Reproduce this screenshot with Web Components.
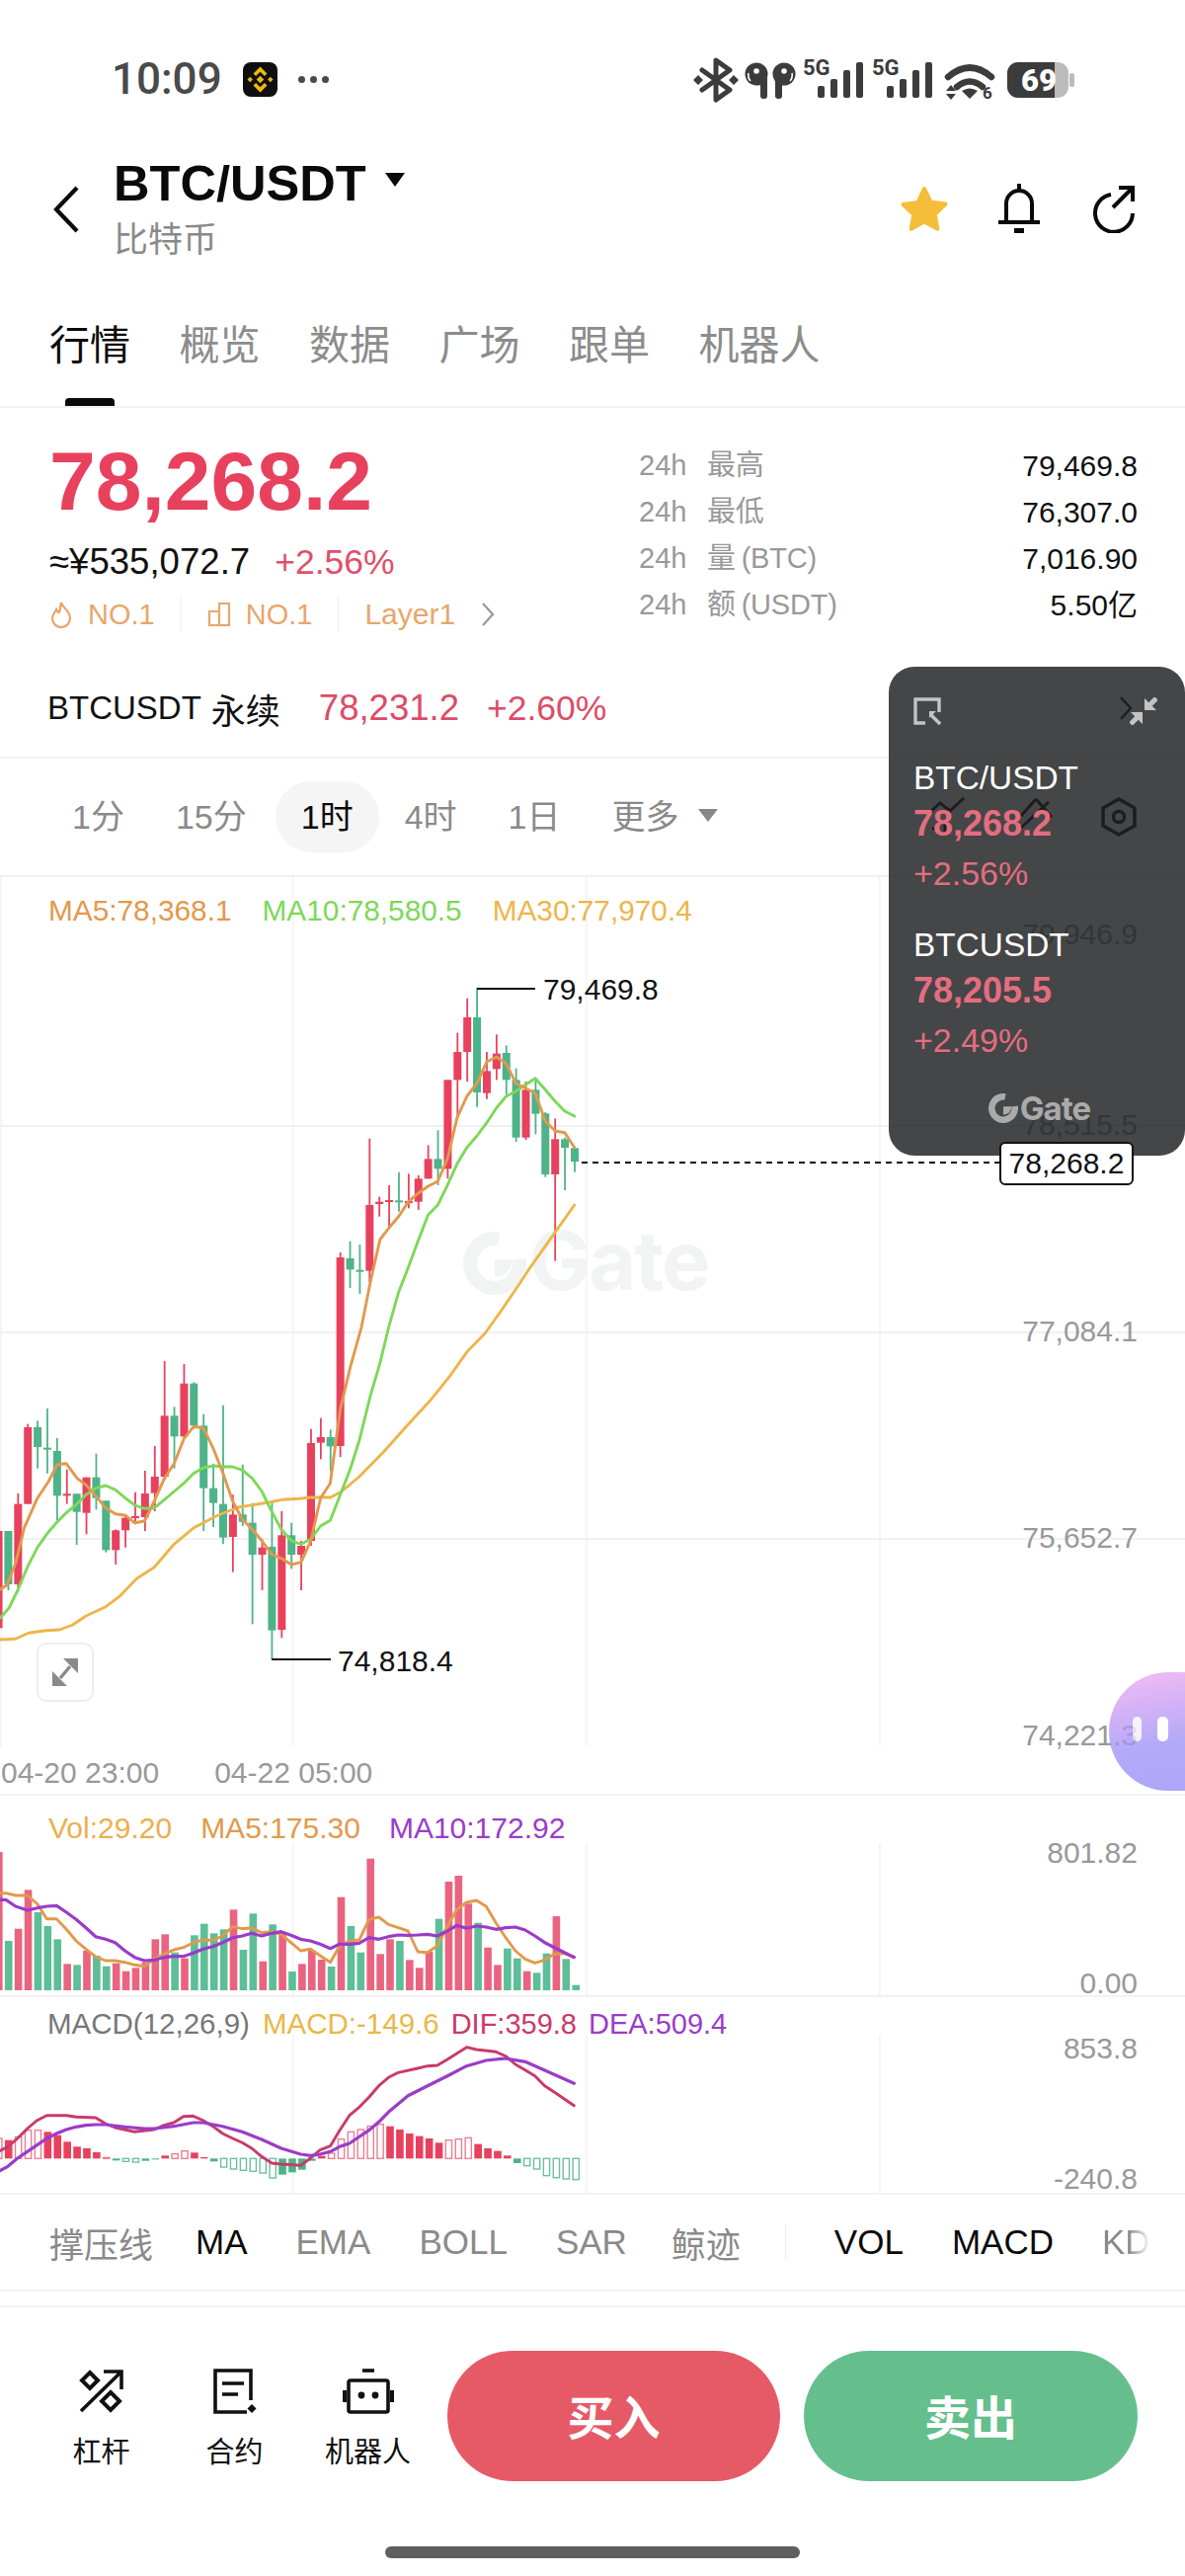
<!DOCTYPE html>
<html lang="zh">
<head>
<meta charset="utf-8">
<title>BTC/USDT</title>
<style>
  html, body { margin: 0; padding: 0; background: #fff; }
  body { font-family: "Liberation Sans", "Noto Sans CJK SC", sans-serif; color: #000; }
</style>
</head>
<body>
<trade-app>
  <status-bar></status-bar>
  <pair-header></pair-header>
  <tab-row>
    <tab-item active>行情</tab-item><tab-item>概览</tab-item><tab-item>数据</tab-item>
    <tab-item>广场</tab-item><tab-item>跟单</tab-item><tab-item>机器人</tab-item>
  </tab-row>
  <price-summary>
    <stat-row label="最高" value="79,469.8"></stat-row>
    <stat-row label="最低" value="76,307.0"></stat-row>
    <stat-row label="量 (BTC)" value="7,016.90"></stat-row>
    <stat-row label="额 (USDT)" value="5.50亿"></stat-row>
  </price-summary>
  <contract-row></contract-row>
  <interval-bar></interval-bar>
  <kline-main></kline-main>
  <kline-vol></kline-vol>
  <kline-macd></kline-macd>
  <indicator-bar></indicator-bar>
  <trade-bar></trade-bar>
  <floating-ticker slot="over"></floating-ticker>
  <price-tag slot="over">78,268.2</price-tag>
  <float-button slot="over"></float-button>
</trade-app>

<script>
const RED = '#E8415E';
const GREEN = '#4DB388';

// base class, sets up the open shadow root from a html string
class Comp extends HTMLElement {
    constructor(html) {
        super();
        this.attachShadow({ mode: 'open' });
        this.shadowRoot.innerHTML = html;
    }
}

class TradeApp extends Comp {
    constructor() {
        super(`<style>
          :host { display: flex; flex-direction: column; position: relative; width: 1200px; height: 2608px; overflow: hidden; background: #fff; }
        </style><slot></slot><slot name="over"></slot>`);
    }
}

class StatusBar extends Comp {
    constructor() {
        super(`<style>
          :host { display: flex; align-items: center; height: 160px; padding-left: 113px; box-sizing: border-box; color: #4a4a4a; }
          .time { font: 500 44px Roboto, sans-serif; width: 133px; }
          .app { display: block; }
          .dots { display: flex; gap: 5px; margin-left: 21px; }
          .dots i { width: 7px; height: 7px; border-radius: 50%; background: #4a4a4a; }
          .icons { position: absolute; left: 0; top: 0; }
        </style>
        <span class="time">10:09</span>
        <svg class="app" width="35" height="35" viewBox="0 0 35 35">
          <rect width="35" height="35" rx="8" fill="#0f0f0f"/>
          <g fill="#F0B90B">
            <path d="M17.5 4.5l7 7-2.6 2.6-4.4-4.4-4.4 4.4-2.6-2.6z"/>
            <path d="M17.5 30.5l-7-7 2.6-2.6 4.4 4.4 4.4-4.4 2.6 2.6z"/>
            <path d="M17.5 13.7l3.8 3.8-3.8 3.8-3.8-3.8z"/>
            <path d="M7.2 14.8l2.7 2.7-2.7 2.7-2.7-2.7z"/>
            <path d="M27.8 14.8l2.7 2.7-2.7 2.7-2.7-2.7z"/>
          </g>
        </svg>
        <span class="dots"><i></i><i></i><i></i></span>
        <svg class="icons" width="1200" height="160" viewBox="0 0 1200 160">
          <g fill="#3c3c3c">
            <path d="M711 71l28 20-14 10V61l14 10-28 20" fill="none" stroke="#3c3c3c" stroke-width="5" stroke-linejoin="round" stroke-linecap="round"/>
            <path d="M707 76l5 5-5 5-5-5zM743 76l5 5-5 5-5-5z"/>
            <circle cx="766" cy="75" r="11.5"/><rect x="770" y="76" width="7" height="24" rx="3"/>
            <circle cx="794" cy="75" r="11.5"/><rect x="785" y="76" width="7" height="24" rx="3"/>
            <circle cx="766" cy="72" r="2.8" fill="#fff"/><circle cx="794" cy="72" r="2.800" fill="#fff"/>
            <path d="M758 74q-1 5 2 8M802 74q1 5-2 8" stroke="#fff" stroke-width="1.600" fill="none"/>
            <text x="813" y="76" font-family="Roboto, sans-serif" font-weight="700" font-size="22">5G</text>
            <rect x="828" y="87" width="7" height="12" rx="2"/><rect x="841" y="80" width="7" height="19" rx="2"/>
            <rect x="854" y="71" width="7" height="28" rx="2"/><rect x="867" y="63" width="7" height="36" rx="2"/>
            <text x="883" y="76" font-family="Roboto, sans-serif" font-weight="700" font-size="22">5G</text>
            <rect x="898" y="87" width="7" height="12" rx="2"/><rect x="911" y="80" width="7" height="19" rx="2"/>
            <rect x="924" y="71" width="7" height="28" rx="2"/><rect x="937" y="63" width="7" height="36" rx="2"/>
            <path d="M960 78q22-19 44 0M969 88q13-11 26 0" fill="none" stroke="#3c3c3c" stroke-width="6.5" stroke-linecap="round"/>
            <path d="M974 92q8-5 16 0l-8 8zM958 92l5-6 5 6zM958 95h10l-5 6z"/>
            <text x="995" y="100" font-family="Roboto, sans-serif" font-weight="700" font-size="17">6</text>
            <rect x="1020" y="63" width="62" height="36" rx="11" fill="#bbb"/>
            <path d="M1031 63h37v36h-37a11 11 0 0 1-11-11V74a11 11 0 0 1 11-11z"/>
            <rect x="1083" y="74" width="5" height="14" rx="2.5" fill="#bbb"/>
            <text x="1034" y="92" font-family="Roboto, sans-serif" font-weight="900" font-size="31" fill="#fff">69</text>
          </g>
        </svg>`);
    }
}

class PairHeader extends Comp {
    constructor() {
        super(`<style>
          :host { display: flex; height: 126px; box-sizing: border-box; padding-right: 50px; }
          .back { margin: 28px 0 0 54px; }
          .title { margin-left: 35px; }
          .pair { display: flex; align-items: center; height: 52px; font-weight: 700; font-size: 50.6px; color: #0a0a0a; line-height: 52px; }
          .pair svg { margin: -8px 0 0 19px; }
          .name { font-size: 35px; line-height: 50px; margin-top: 6px; color: #8a8a8a; }
          .actions { display: flex; margin-left: auto; margin-top: 26px; height: 50px; }
          .actions svg { display: block; }
        </style>
        <svg class="back" width="26" height="48" viewBox="0 0 26 48"><path d="M24 2L3 24l21 22" fill="none" stroke="#0a0a0a" stroke-width="4.2"/></svg>
        <div class="title">
          <div class="pair">BTC/USDT<svg width="20" height="14" viewBox="0 0 20 14"><path d="M0 0h20l-10 14z" fill="#0a0a0a"/></svg></div>
          <div class="name">比特币</div>
        </div>
        <div class="actions">
          <svg width="52" height="50" viewBox="0 0 52 50"><path d="M26 5l6.6 13.6 15 2-10.9 10.4 2.7 14.8L26 38.6l-13.4 7.2 2.7-14.8L4.400 21l15-2z" fill="#F4BE3B" stroke="#F4BE3B" stroke-width="4" stroke-linejoin="round"/></svg>
          <svg style="margin-left:48px" width="44" height="50" viewBox="0 0 44 50">
            <path d="M22 0v6M9 39V20a13 13 0 0 1 26 0v19M1 39h42" fill="none" stroke="#0a0a0a" stroke-width="4"/>
            <rect x="17" y="45" width="10" height="5" fill="#0a0a0a"/>
          </svg>
          <svg style="margin-left:52px" width="44" height="50" viewBox="0 0 44 50">
            <path d="M19 11A19 19 0 1 0 41 30" fill="none" stroke="#0a0a0a" stroke-width="4"/>
            <path d="M21 24L41 4M27 4h14v14" fill="none" stroke="#0a0a0a" stroke-width="4"/>
          </svg>
        </div>`);
    }
}

class TabRow extends Comp {
    constructor() {
        super(`<style>
          :host { display: flex; gap: 49.5px; height: 127px; box-sizing: border-box; padding-left: 50px; border-bottom: 2px solid #f2f2f2; }
        </style><slot></slot>`);
    }
}

class TabItem extends Comp {
    constructor() {
        super(`<style>
          :host { display: block; position: relative; height: 125px; font-size: 41px; line-height: 128px; color: #8c8c8c; }
          :host([active]) { color: #0a0a0a; }
          :host([active])::after { content: ""; position: absolute; left: 16px; right: 16px; bottom: 0; height: 8px; border-radius: 4px 4px 0 0; background: #0a0a0a; }
        </style><slot></slot>`);
    }
}

class StatRow extends Comp {
    constructor() {
        super(`<style>
          :host { display: flex; height: 47px; line-height: 47px; font-size: 29px; white-space: nowrap; }
          .h { width: 69px; color: #999; }
          .l { color: #999; word-spacing: -2px; letter-spacing: -.2px; }
          .v { margin-left: auto; color: #111; font-size: 30px; }
        </style><span class="h">24h</span><span class="l"></span><span class="v"></span>`);
    }
    connectedCallback() {
        this.shadowRoot.querySelector('.l').textContent = this.getAttribute('label');
        this.shadowRoot.querySelector('.v').textContent = this.getAttribute('value');
    }
}

class PriceSummary extends Comp {
    constructor() {
        super(`<style>
          :host { display: flex; height: 255px; box-sizing: border-box; padding: 5px 48px 0 50px; }
          .left { width: 597px; padding-top: 27px; }
          .price { font-weight: 700; font-size: 84px; line-height: 84px; color: ${RED}; letter-spacing: 0; }
          .sub { display: flex; margin-top: 18px; line-height: 44px; font-size: 36.6px; color: #111; }
          .sub b { font-weight: 400; font-size: 35.5px; color: #E0506A; margin-left: 25px; }
          .tags { display: flex; align-items: center; margin-top: 9px; height: 44px; font-size: 29px; color: #E8A66B; }
          .tags svg { display: block; margin-right: 15px; }
          .tags i { width: 1px; height: 36px; background: #f0f0f0; margin: 0 26px; }
          .tags .layer { font-size: 30px; }
          .right { flex: 1; padding-top: 30px; }
        </style>
        <div class="left">
          <div class="price">78,268.2</div>
          <div class="sub">≈¥535,072.7<b>+2.56%</b></div>
          <div class="tags">
            <svg width="24" height="28" viewBox="0 0 24 28"><path d="M12 2c1 5 9 8 9 16a9 9 0 0 1-18 0c0-4 3-6 4-9 1 2 2 3 3 3 1-3 1-6 2-10z" fill="none" stroke="#E8A66B" stroke-width="2.2"/></svg>
            <span>NO.1</span><i></i>
            <svg width="24" height="26" viewBox="0 0 24 26"><path d="M2 10h10v14H2zM12 2h10v22H12z" fill="none" stroke="#E8A66B" stroke-width="2.2"/></svg>
            <span>NO.1</span><i></i>
            <span class="layer">Layer1</span>
            <svg style="margin:0 0 0 26px" width="14" height="24" viewBox="0 0 14 24"><path d="M2 1l10 11L2 23" fill="none" stroke="#999" stroke-width="2.2"/></svg>
          </div>
        </div>
        <div class="right"><slot></slot></div>`);
    }
}

class ContractRow extends Comp {
    constructor() {
        super(`<style>
          :host { display: flex; align-items: center; height: 100px; box-sizing: border-box; padding: 0 53px 0 48px; border-bottom: 2px solid #f2f2f2; font-size: 33px; color: #111; }
          .cn { font-size: 35px; margin-left: 10px; }
          .p { font-size: 36.5px; color: #DC4C68; margin-left: 39px; }
          .c { font-size: 35.5px; color: #DC4C68; margin-left: 28px; }
          svg { margin-left: auto; display: block; }
        </style>BTCUSDT<span class="cn">永续</span><span class="p">78,231.2</span><span class="c">+2.60%</span>
        <svg width="14" height="24" viewBox="0 0 14 24"><path d="M2 1l10 11L2 23" fill="none" stroke="#111" stroke-width="2.4"/></svg>`);
    }
}

class IntervalBar extends Comp {
    constructor() {
        super(`<style>
          :host { display: flex; align-items: center; height: 120px; box-sizing: border-box; padding: 0 49px 0 47px; border-bottom: 2px solid #f2f2f2; font-size: 34px; color: #8a8a8a; }
          span { display: block; padding: 0 26px; line-height: 72px; }
          .on { background: #f5f5f5; border-radius: 36px; color: #0a0a0a; margin-left: 3px; }
          .tri { margin: 0 0 4px -7px; }
          .tools { display: flex; margin-left: auto; }
          .tools svg { display: block; }
        </style>
        <span>1分</span><span>15分</span><span class="on">1时</span><span>4时</span><span>1日</span><span>更多</span>
        <svg class="tri" width="20" height="13" viewBox="0 0 20 13"><path d="M0 0h20l-10 13z" fill="#888"/></svg>
        <div class="tools">
          <svg width="36" height="38" viewBox="0 0 36 38" fill="none" stroke="#111" stroke-width="3"><path d="M2 14l9-8 10 8L35 1"/><path d="M3 32h4M16 24v12"/></svg>
          <svg style="margin-left:55px" width="34" height="38" viewBox="0 0 34 38" fill="none" stroke="#111" stroke-width="3"><path d="M17 2l15 17-15 17M17 2L2 19M2 31L30 5"/></svg>
          <svg style="margin-left:49px" width="36" height="40" viewBox="0 0 36 40" fill="none" stroke="#111" stroke-width="3.500"><path d="M18 2l16 9v18l-16 9-16-9V11z"/><circle cx="18" cy="20" r="5.500"/></svg>
        </div>`);
    }
}

// zoom coordinates of the reference to page coordinates
const ZX = 2.24;
const candleX = (i) => (772 + (i - 35) * 22.15) / ZX;
const zy = (z) => 880 + z / 3;
const zy4 = (z) => 880 + (z + 1260) / 3;

const poly = (pts, color, w) => `<polyline points="${pts.map(p => p[0].toFixed(1) + ',' + p[1].toFixed(1)).join(' ')}" fill="none" stroke="${color}" stroke-width="${w}" stroke-linejoin="round" stroke-linecap="round"/>`;

// r/g, high, body top, body bottom, low - first part read in the lower crop
const CANDLES_LOW = [
    ['r',750,750,1045,1045],['g',750,750,912,930],['r',636,668,912,935],['r',425,435,668,668],
    ['g',415,435,495,560],['g',378,497,503,575],['g',468,507,643,718],['r',563,637,642,668],
    ['g',637,637,692,792],['r',587,587,695,760],['g',515,587,650,685],['g',658,658,808,815],
    ['r',745,748,808,852],['r',700,710,748,800],['r',632,705,709,730],['r',567,636,708,750],
    ['r',492,585,635,690],['r',234,400,585,595],['g',373,400,463,560],['r',243,302,463,470],
    ['g',298,302,430,440],['g',395,430,620,750],['g',545,620,665,738],['g',368,668,770,790],
    ['r',640,700,768,875],['g',548,700,722,735],['g',665,725,822,1033],['r',775,800,822,930],
    ['g',660,798,1052,1140],['r',690,763,1050,1075],['g',725,763,822,865],['r',780,795,822,930],
    ['r',440,483,780,795],['r',407,465,482,532],['g',442,465,493,568],['r',-96,-81,492,525]
];
const CANDLES_HIGH = [
    ['g',1130,1182,1216,1272],['g',1140,1217,1220,1290],['r',818,1020,1220,1255],['r',995,1010,1017,1055],
    ['r',960,1005,1008,1090],['g',920,1006,1010,1040],['r',925,1008,1012,1030],['r',930,940,1010,1035],
    ['r',838,880,940,940],['g',793,880,910,960],['r',640,640,910,940],['r',497,555,640,755],
    ['r',392,450,555,645],['g',360,450,678,722],['r',555,613,680,698],['r',502,560,607,640],
    ['g',535,558,640,685],['g',605,640,815,828],['r',645,670,815,822],['g',635,670,743,805],
    ['g',738,742,927,935],['r',757,820,927,1190],['g',815,820,846,975],['g',845,847,888,920]
];

const MA5 = [[0,928,1],[15,915,1],[35,850,1],[55,740,1],[85,650,1],[110,600,1],[130,548,1],[150,545,1],[175,590,1],[195,610,1],[215,640,1],[240,680,1],[262,698,1],[285,703,1],[305,725,1],[328,720,1],[350,660,1],[373,590,1],[395,545,1],[417,470,1],[439,433,1],[461,437,1],[484,500,1],[506,575,1],[528,660,1],[550,715,1],[572,745,1],[594,780,1],[616,820,1],[640,835,1],[661,852,1],[683,845,1],[705,780,1],[727,650,1],[749,605,1],[772,380,1],[795,250,1],
    [820,1390,0],[840,1255,0],[862,1125,0],[882,1090,0],[904,1055,0],[926,1010,0],[948,985,0],[971,963,0],[993,948,0],[1015,880,0],[1037,755,0],[1059,690,0],[1082,650,0],[1104,585,0],[1126,570,0],[1148,590,0],[1170,650,0],[1192,665,0],[1214,680,0],[1237,765,0],[1259,795,0],[1281,800,0],[1303,845,0]];
const MA10 = [[0,1015,1],[20,985,1],[40,930,1],[62,860,1],[85,800,1],[106,760,1],[128,725,1],[150,695,1],[173,670,1],[195,640,1],[217,620,1],[240,612,1],[262,625,1],[284,650,1],[306,672,1],[328,682,1],[350,680,1],[373,655,1],[395,630,1],[417,605,1],[439,575,1],[461,558,1],[484,552,1],[506,555,1],[528,555,1],[550,565,1],[572,590,1],[594,630,1],[616,690,1],[638,745,1],[661,780,1],[683,790,1],[705,775,1],[727,735,1],[749,718,1],[772,640,1],[795,560,1],[816,470,1],[840,340,1],[862,240,1],
    [882,1390,0],[904,1285,0],[926,1210,0],[948,1130,0],[971,1050,0],[993,1020,0],[1015,960,0],[1037,895,0],[1059,845,0],[1082,810,0],[1104,770,0],[1126,725,0],[1148,690,0],[1170,675,0],[1192,655,0],[1214,635,0],[1237,670,0],[1259,705,0],[1281,735,0],[1303,750,0]];
const MA30 = [[0,1080,1],[35,1078,1],[65,1060,1],[105,1052,1],[135,1050,1],[165,1035,1],[195,1008,1],[240,980,1],[270,950,1],[310,895,1],[350,860,1],[395,790,1],[440,740,1],[490,705,1],[540,678,1],[610,663,1],[640,655,1],[680,652,1],[705,648,1],[750,648,1],[775,630,1],[815,585,1],[870,510,1],[920,435,1],[975,355,1],[1020,280,1],[1060,205,1],[1100,150,1],[1140,75,1],
    [1178,1260,0],[1200,1215,0],[1250,1120,0],[1303,1020,0]];

const toPts = (arr) => arr.map(p => [p[0] / ZX, p[2] ? zy4(p[1]) : zy(p[1])]);

function gateMark(x, y, s, color) {
    // round mark with the notch, s = diameter
    const r = s * 0.39, w = s * 0.22, c = 2 * Math.PI * r;
    return `<g transform="translate(${x + s / 2} ${y + s / 2})">
      <circle r="${r}" fill="none" stroke="${color}" stroke-width="${w}" stroke-dasharray="${c * 0.8} ${c * 0.2}" transform="rotate(-10)"/>
      <path d="M0 ${-s * 0.06}h${s * 0.28}a${s * 0.28} ${s * 0.28} 0 0 1 ${-s * 0.28} ${s * 0.28}z" fill="${color}"/>
    </g>`;
}

class KlineMain extends Comp {
    constructor() {
        let grid = '';
        [1, 297, 594, 891].forEach(x => { grid += `<line x1="${x}" x2="${x}" y1="888" y2="1768" stroke="#f5f5f5" stroke-width="2"/>`; });
        [1140, 1349, 1558].forEach(y => { grid += `<line x1="0" x2="1200" y1="${y}" y2="${y}" stroke="#f1f1f1" stroke-width="2"/>`; });

        let candles = '';
        const drawCandle = (c, i, conv) => {
            const x = candleX(i);
            const col = c[0] === 'r' ? RED : GREEN;
            const top = conv(c[2]);
            const h = Math.max(conv(c[3]) - top, 2);
            candles += `<line x1="${x}" x2="${x}" y1="${conv(c[1])}" y2="${conv(c[4])}" stroke="${col}" stroke-width="1.800"/>`;
            candles += `<rect x="${x - 4}" y="${top}" width="8" height="${h}" fill="${col}"/>`;
        };
        CANDLES_LOW.forEach((c, i) => drawCandle(c, i, zy4));
        CANDLES_HIGH.forEach((c, i) => drawCandle(c, i + 36, zy));

        const labels = [[946, '79,946.9'], [1139, '78,515.5'], [1348, '77,084.1'], [1557, '75,652.7'], [1757, '74,221.3']]
            .map(l => `<text x="1152" y="${l[0] + 10}" text-anchor="end" font-size="30" fill="#999">${l[1]}</text>`).join('');

        super(`<style>
          :host { display: block; position: relative; height: 930px; box-sizing: border-box; border-bottom: 2px solid #f2f2f2; }
          svg.canvas { position: absolute; left: 0; top: 0; display: block; overflow: visible; }
          .legend { position: relative; display: flex; gap: 31px; padding: 17px 0 0 49px; font-size: 29.8px; line-height: 34px; }
          .dates { position: absolute; left: 1px; top: 889px; display: flex; gap: 56px; font-size: 30px; color: #999; line-height: 36px; }
          .expand { position: absolute; left: 37px; top: 775px; width: 58px; height: 60px; box-sizing: border-box; border: 2px solid #eee; border-radius: 10px; background: #fff; display: flex; align-items: center; justify-content: center; }
          .wm { font-family: Inter, sans-serif; font-weight: 700; }
        </style>
        <svg class="canvas" width="1200" height="930" viewBox="0 888 1200 930">
          ${grid}
          ${gateMark(469, 1247, 64, '#f2f4f4')}
          <text class="wm" x="536" y="1306" font-size="83" letter-spacing="-2" fill="#f2f4f4">Gate</text>
          ${labels}
          ${candles}
          ${poly(toPts(MA30), '#EDB54A', 2.9)}
          ${poly(toPts(MA10), '#7DD85A', 2.9)}
          ${poly(toPts(MA5), '#E2994C', 2.9)}
          <path d="M483 1001h59M275 1680h60" stroke="#111" stroke-width="1.800" fill="none"/>
          <text x="550" y="1012" font-size="30" fill="#111">79,469.8</text>
          <text x="342" y="1692" font-size="30" fill="#111">74,818.4</text>
          <line x1="589" x2="1013" y1="1177" y2="1177" stroke="#111" stroke-width="2" stroke-dasharray="6 5"/>
        </svg>
        <div class="legend">
          <span style="color:#E2994C">MA5:78,368.1</span><span style="color:#7DD85A">MA10:78,580.5</span><span style="color:#EDB54A">MA30:77,970.4</span>
        </div>
        <div class="expand">
          <svg width="30" height="30" viewBox="0 0 30 30" fill="#8a8a8a">
            <path d="M28 1v15l-15-15zM2 29V14l15 15z"/><path d="M20 9L10 21" stroke="#8a8a8a" stroke-width="3.400"/>
          </svg>
        </div>
        <div class="dates"><span>04-20 23:00</span><span>04-22 05:00</span></div>`);
    }
}

// second crop of the lower panes
const VX = 2.529;
const vy = (z) => 1850 + z / 3;
const paneX = (i) => (-3 + i * 25.05) / VX;
const paneLine = (arr) => arr.map(p => [p[0] / VX, vy(p[1])]);
const paneGrid = (y1, y2) => [297, 594, 891].map(x => `<line x1="${x}" x2="${x}" y1="${y1}" y2="${y2}" stroke="#f5f5f5" stroke-width="2"/>`).join('');

const VOL = [['r',75],['g',345],['r',308],['r',190],['g',258],['g',300],['g',340],['r',415],['g',418],['r',375],
    ['g',390],['g',422],['r',413],['r',437],['r',427],['r',410],['r',340],['r',325],['g',380],['r',398],
    ['g',328],['g',293],['g',322],['g',310],['r',250],['g',372],['g',262],['r',407],['g',295],['r',320],
    ['g',438],['r',415],['r',375],['r',402],['g',423],['r',212],['g',300],['g',380],['r',95],['r',385],
    ['r',340],['g',345],['r',403],['r',427],['r',378],['g',278],['r',165],['r',147],['r',232],['g',290],
    ['r',365],['r',418],['g',368],['g',398],['r',437],['g',442],['g',383],['r',270],['g',400],['g',479]];
const VOL_MA5 = [[-3,200],[15,200],[40,207],[70,207],[95,232],[120,278],[145,278],[170,310],[195,345],[220,370],[245,393],[270,405],[295,405],[320,410],[345,418],[370,422],[395,400],[420,385],[445,372],[470,365],[495,350],[520,342],[545,343],[570,330],[596,302],[620,308],[645,305],[670,320],[696,317],[720,325],[745,350],[770,375],[795,370],[820,390],[846,410],[870,360],[895,345],[920,342],[945,280],[970,273],[995,295],[1020,305],[1045,315],[1070,378],[1095,380],[1120,360],[1146,300],[1170,250],[1195,228],[1220,222],[1245,240],[1270,290],[1295,335],[1320,375],[1345,400],[1370,412],[1395,403],[1420,385],[1445,383],[1470,393]];
const VOL_MA10 = [[-3,220],[15,220],[40,240],[70,252],[95,245],[120,240],[145,238],[170,258],[195,280],[220,305],[245,332],[270,340],[295,350],[320,375],[345,395],[370,405],[396,403],[420,395],[445,392],[470,392],[495,382],[520,370],[545,362],[570,350],[596,335],[620,330],[645,322],[670,330],[696,322],[720,317],[745,328],[770,340],[795,345],[820,355],[846,368],[870,355],[895,355],[920,352],[945,335],[970,340],[995,332],[1020,327],[1045,328],[1070,327],[1095,325],[1120,330],[1146,315],[1170,298],[1195,307],[1220,300],[1245,303],[1270,310],[1295,305],[1320,303],[1345,312],[1370,330],[1395,350],[1420,365],[1445,380],[1470,395]];

class KlineVol extends Comp {
    constructor() {
        const base = vy(495);
        const bars = VOL.map((b, i) => `<rect x="${paneX(i) - 3.8}" y="${vy(b[1])}" width="7.600" height="${base - vy(b[1])}" fill="${b[0] === 'r' ? '#EA6480' : '#5DBE97'}"/>`).join('');
        super(`<style>
          :host { display: block; position: relative; height: 204px; box-sizing: border-box; border-bottom: 2px solid #f2f2f2; }
          svg { position: absolute; left: 0; top: 0; display: block; overflow: visible; }
          .legend { position: relative; display: flex; gap: 29px; padding: 16px 0 0 49px; font-size: 30px; line-height: 34px; }
        </style>
        <svg width="1200" height="204" viewBox="0 1818 1200 204">
          ${paneGrid(1866, 2020)}
          ${bars}
          ${poly(paneLine(VOL_MA5), '#E2994C', 2.9)}
          ${poly(paneLine(VOL_MA10), '#9A3CC9', 3.2)}
          <text x="1152" y="1886" text-anchor="end" font-size="30" fill="#999">801.82</text>
          <text x="1152" y="2018" text-anchor="end" font-size="30" fill="#999">0.00</text>
        </svg>
        <div class="legend"><span style="color:#EBB04E">Vol:29.20</span><span style="color:#E2994C">MA5:175.30</span><span style="color:#9A3CC9">MA10:172.92</span></div>`);
    }
}

// index, bar end (zoom y), hollow. below zero line means green
const MACD_BARS = [[945,1],[950,0],[940,1],[920,1],[920,1],[925,0],[935,0],[955,0],[970,0],[975,0],[987,0],[1003,1],
    [1012,0],[1015,1],[1017,1],[1013,0],[1009,0],[997,0],[992,1],[983,1],[988,0],[1002,0],[1015,0],[1032,1],[1038,1],[1042,1],[1045,1],[1050,1],[1065,1],[1055,0],[1048,0],[1040,0],[1013,0],
    [998,0],[990,1],[947,1],[925,1],[918,1],[908,1],[902,1],[908,0],[918,0],[930,0],[938,0],[945,0],[958,0],[950,1],[947,1],[943,1],[962,0],[975,0],[983,0],[997,0],
    [1020,0],[1028,1],[1038,1],[1058,1],[1064,1],[1068,1],[1070,1]];
const DIF = [[-3,985],[20,970],[45,945],[70,915],[95,890],[120,875],[170,875],[195,880],[245,882],[270,900],[295,912],[345,925],[395,918],[420,905],[445,897],[470,878],[495,877],[520,890],[545,908],[570,930],[596,945],[620,958],[645,975],[670,1000],[696,1020],[720,1023],[770,1027],[795,1005],[820,980],[846,968],[870,920],[895,875],[920,850],[945,820],[970,785],[995,760],[1020,745],[1070,732],[1095,725],[1120,723],[1146,705],[1195,668],[1220,675],[1270,682],[1295,695],[1320,720],[1345,737],[1370,755],[1395,785],[1420,805],[1470,845]];
const DEA = [[-3,1045],[20,1030],[45,1005],[70,985],[95,965],[120,945],[145,930],[170,918],[195,910],[220,905],[245,903],[270,903],[320,910],[370,915],[395,915],[445,908],[495,897],[520,897],[570,908],[620,925],[670,948],[720,975],[770,993],[795,997],[820,993],[846,985],[870,970],[895,960],[945,920],[970,895],[995,865],[1045,815],[1095,785],[1146,755],[1195,725],[1245,708],[1295,702],[1345,712],[1395,738],[1470,778]];

class KlineMacd extends Comp {
    constructor() {
        const zero = 1005;
        const bars = MACD_BARS.map((b, i) => {
            const up = b[0] < zero;
            const y1 = vy(Math.min(b[0], zero + 1));
            const y2 = vy(Math.max(b[0], zero + 1));
            const x = paneX(i) - 3.8;
            if (b[1]) {
                const col = up ? '#E87F93' : '#6DC0A0';
                return `<rect x="${x + 0.7}" y="${y1}" width="6.200" height="${y2 - y1}" fill="none" stroke="${col}" stroke-width="1.400"/>`;
            }
            return `<rect x="${x}" y="${y1}" width="7.600" height="${y2 - y1}" fill="${up ? RED : GREEN}"/>`;
        }).join('');
        super(`<style>
          :host { display: block; position: relative; height: 200px; box-sizing: border-box; border-bottom: 2px solid #f2f2f2; }
          svg { position: absolute; left: 0; top: 0; display: block; overflow: visible; }
          .legend { position: relative; display: flex; gap: 13px; padding: 10px 0 0 48px; font-size: 29.5px; line-height: 34px; white-space: nowrap; }
          .tight { font-size: 29px; margin-left: -1px; }
        </style>
        <svg width="1200" height="200" viewBox="0 2022 1200 200">
          ${paneGrid(2060, 2220)}
          ${bars}
          ${poly(paneLine(DIF), '#C93A6B', 2.9)}
          ${poly(paneLine(DEA), '#9A3CC9', 3.2)}
          <text x="1152" y="2084" text-anchor="end" font-size="30" fill="#999">853.8</text>
          <text x="1152" y="2216" text-anchor="end" font-size="30" fill="#999">-240.8</text>
        </svg>
        <div class="legend"><span style="color:#777">MACD(12,26,9)</span><span style="color:#E9B84A">MACD:-149.6</span><span class="tight" style="color:#C93A6B">DIF:359.8</span><span class="tight" style="color:#9A3CC9">DEA:509.4</span></div>`);
    }
}

class IndicatorBar extends Comp {
    constructor() {
        super(`<style>
          :host { display: flex; align-items: center; gap: 49px; height: 98px; box-sizing: border-box; padding-left: 50px; border-bottom: 2px solid #f2f2f2; font-size: 35px; color: #8a8a8a; white-space: nowrap; }
          .on { color: #0a0a0a; }
          .first { margin-right: -6px; }
          .whale { margin-left: -4px; }
          i { width: 1px; height: 38px; background: #eee; margin-left: -4px; }
          .fade { -webkit-mask-image: linear-gradient(90deg, #000 40%, transparent 75%); mask-image: linear-gradient(90deg, #000 40%, transparent 75%); }
        </style>
        <span class="first">撑压线</span><span class="on">MA</span><span>EMA</span><span>BOLL</span><span>SAR</span><span class="whale">鲸迹</span><i></i>
        <span class="on">VOL</span><span class="on">MACD</span><span class="fade">KDJ</span>`);
    }
}

class TradeBar extends Comp {
    constructor() {
        super(`<style>
          :host { display: block; margin-top: 14px; border-top: 2px solid #f2f2f2; flex: 1; box-sizing: border-box; padding-top: 44px; }
          .row { display: flex; padding-left: 35px; }
          .tool { width: 135px; display: flex; flex-direction: column; align-items: center; font-size: 29px; line-height: 36px; padding-top: 18px; color: #111; }
          .tool svg { display: block; margin-bottom: 21px; }
          .btn { width: 337px; height: 132px; box-sizing: border-box; padding-bottom: 4px; border-radius: 66px; color: #fff; font-weight: 700; font-size: 47px; display: flex; align-items: center; justify-content: center; }
          .buy { background: #E65A68; margin-left: 13px; }
          .sell { background: #65BF8C; margin-left: 24px; width: 338px; }
          .home { width: 420px; height: 12px; border-radius: 6px; background: #5f5f5f; margin: 66px auto 0; }
        </style>
        <div class="row">
          <div class="tool">
            <svg width="48" height="46" viewBox="0 0 48 46" fill="none" stroke="#111" stroke-width="3.600">
              <path d="M3 43L44 3M26 3h18v18"/>
              <path d="M12 4l8 8-8 8-8-8zM33 24l9 9-9 9-9-9z" stroke-width="4"/>
            </svg>
            <span>杠杆</span>
          </div>
          <div class="tool">
            <svg width="48" height="46" viewBox="0 0 48 46" fill="none" stroke="#111" stroke-width="3.600">
              <path d="M40 32V2H4v42h32"/>
              <path d="M11 15h22M11 26h16"/>
              <path d="M41 36l4.500 4.500L41 45l-4.500-4.500z" fill="#111" stroke="none"/>
            </svg>
            <span>合约</span>
          </div>
          <div class="tool">
            <svg width="52" height="46" viewBox="0 0 52 46" fill="none" stroke="#111" stroke-width="3.600">
              <path d="M20 2h12"/>
              <rect x="6" y="12" width="40" height="32" rx="2"/>
              <path d="M2 22v12M50 22v12" stroke-width="4"/>
              <circle cx="19" cy="27" r="3.400" fill="#111" stroke="none"/><circle cx="33" cy="27" r="3.400" fill="#111" stroke="none"/>
            </svg>
            <span>机器人</span>
          </div>
          <div class="btn buy">买入</div>
          <div class="btn sell">卖出</div>
        </div>
        <div class="home"></div>`);
    }
}

class FloatingTicker extends Comp {
    constructor() {
        super(`<style>
          :host { display: flex; flex-direction: column; position: absolute; z-index: 2; left: 900px; top: 675px; width: 300px; height: 495px; box-sizing: border-box; padding: 31px 28px 28px 25px; border-radius: 26px; background: rgba(30, 32, 34, .83); color: #fff; }
          .top { display: flex; justify-content: space-between; height: 28px; }
          .top svg { display: block; }
          .sym { font-size: 33.4px; line-height: 40px; }
          .px { font-weight: 700; font-size: 36px; line-height: 52px; color: #E46D80; }
          .pc { font-size: 34px; line-height: 48px; color: #E46D80; }
          .first { margin-top: 34px; }
          .second { margin-top: 29px; }
          .logo { display: flex; align-items: center; justify-content: center; margin: auto 0 0 0; height: 40px; color: #aaa; font: 700 33px Inter, sans-serif; letter-spacing: -1px; padding-left: 8px; }
          .logo svg { margin-right: 2px; }
        </style>
        <div class="top">
          <svg width="28" height="28" viewBox="0 0 28 28" fill="none" stroke="#c4c4c4" stroke-width="3.400"><path d="M12 26H2V2h24v13"/><path d="M27 27l-9-9" stroke-width="3.400"/><path d="M16 14v7l7-7z" fill="#c4c4c4" stroke="none"/></svg>
          <svg width="28" height="28" viewBox="0 0 28 28" fill="#c4c4c4"><path d="M15 1v12h12zM13 27V15H1z"/><path d="M20 8l7-7M8 20l-7 7" stroke="#c4c4c4" stroke-width="5"/></svg>
        </div>
        <div class="sym first">BTC/USDT</div>
        <div class="px">78,268.2</div>
        <div class="pc">+2.56%</div>
        <div class="sym second">BTCUSDT</div>
        <div class="px">78,205.5</div>
        <div class="pc">+2.49%</div>
        <div class="logo"><svg width="30" height="30" viewBox="0 0 32 32">${gateMark(0, 0, 32, '#aaa')}</svg><span>Gate</span></div>`);
    }
}

class PriceTag extends Comp {
    constructor() {
        super(`<style>
          :host { display: block; position: absolute; z-index: 3; left: 1012px; top: 1156px; width: 136px; height: 44px; box-sizing: border-box; border: 2px solid #111; border-radius: 6px; background: #fff; color: #111; font-size: 30px; line-height: 40px; text-align: center; }
        </style><slot></slot>`);
    }
}

class FloatButton extends Comp {
    constructor() {
        super(`<style>
          :host { display: flex; position: absolute; z-index: 2; left: 1123px; top: 1693px; width: 77px; height: 120px; box-sizing: border-box; padding: 45px 0 0 24px; gap: 16px; border-radius: 60px 0 0 60px; background: linear-gradient(170deg, #F3A6F3 0%, #9F90F6 60%, #9188F6 100%); opacity: .76; }
          i { width: 9px; height: 25px; border-radius: 5px; background: #fff; opacity: .85; }
          i + i { width: 11px; opacity: 1; }
        </style><i></i><i></i>`);
    }
}

customElements.define('trade-app', TradeApp);
customElements.define('status-bar', StatusBar);
customElements.define('pair-header', PairHeader);
customElements.define('tab-row', TabRow);
customElements.define('tab-item', TabItem);
customElements.define('stat-row', StatRow);
customElements.define('price-summary', PriceSummary);
customElements.define('contract-row', ContractRow);
customElements.define('interval-bar', IntervalBar);
customElements.define('kline-main', KlineMain);
customElements.define('kline-vol', KlineVol);
customElements.define('kline-macd', KlineMacd);
customElements.define('indicator-bar', IndicatorBar);
customElements.define('trade-bar', TradeBar);
customElements.define('floating-ticker', FloatingTicker);
customElements.define('price-tag', PriceTag);
customElements.define('float-button', FloatButton);
</script>
</body>
</html>
